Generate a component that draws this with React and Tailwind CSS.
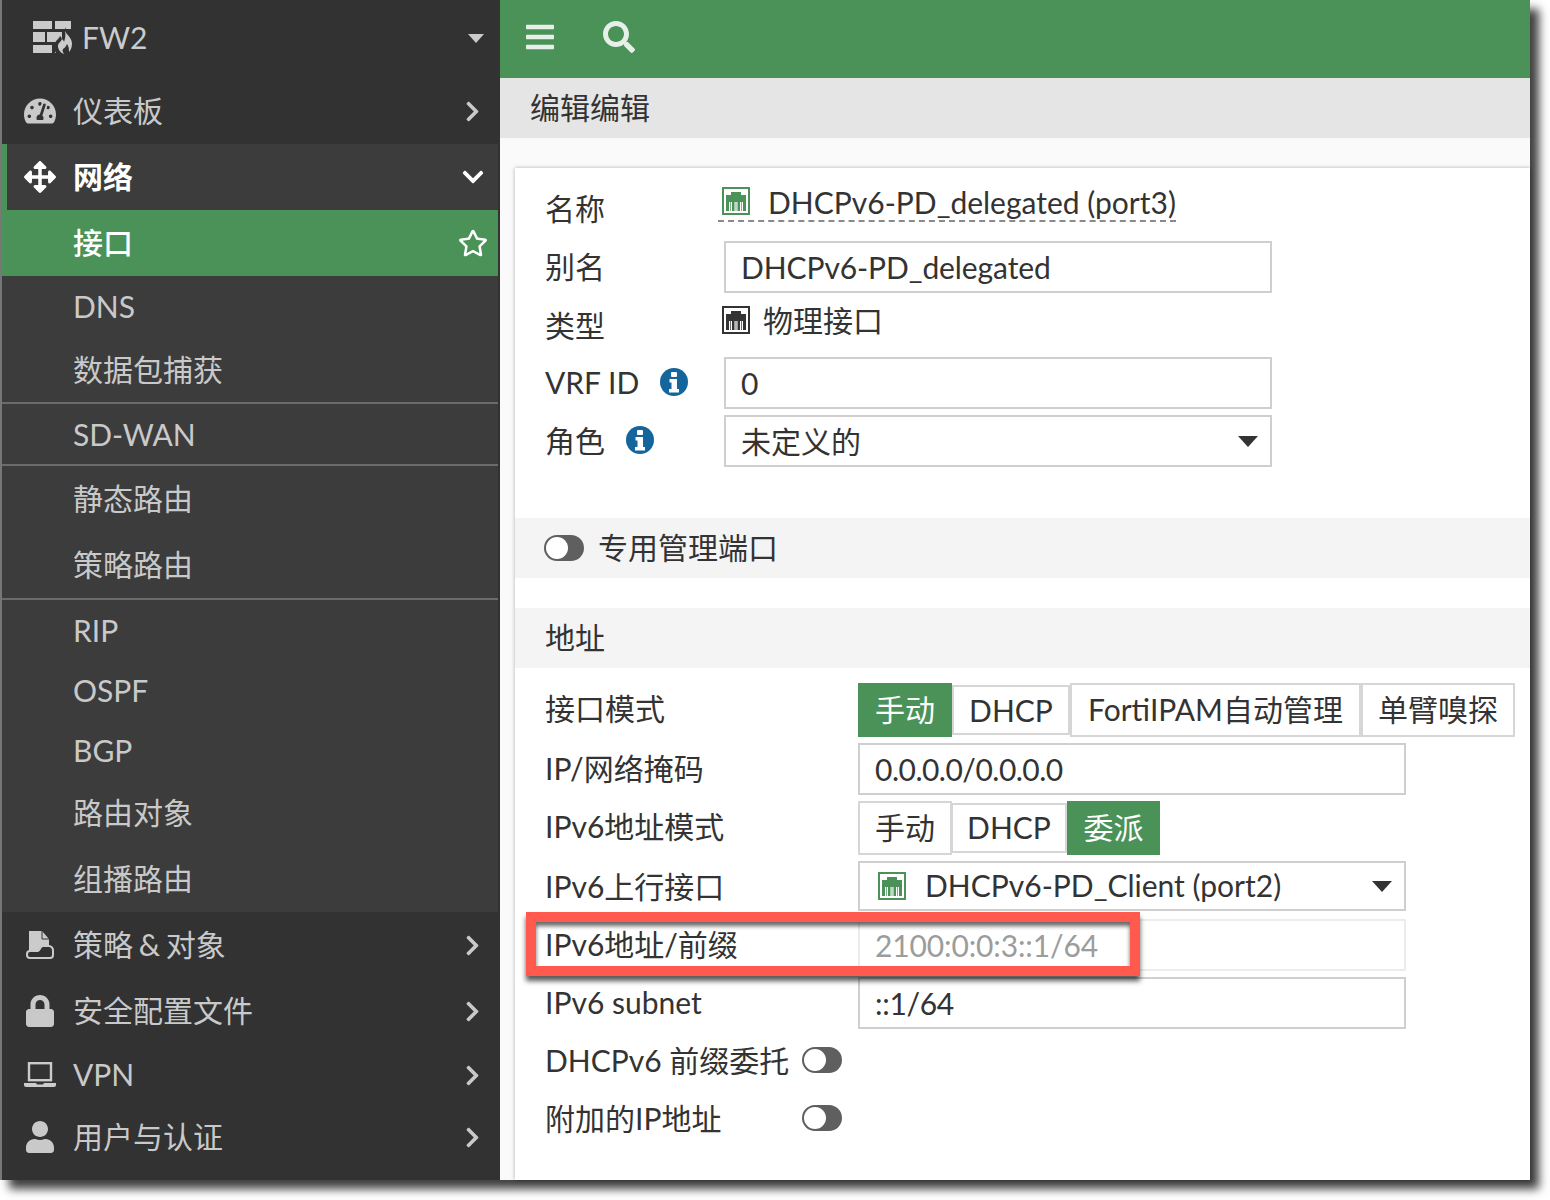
import React from "react";
import { FaTachometerAlt, FaArrowsAlt, FaRegStar, FaChevronRight, FaChevronDown, FaBars, FaSearch, FaLock, FaUser } from "react-icons/fa";

const FONT = "[font-family:Lato,'Noto_Sans_CJK_SC',sans-serif]";

function Logo() {
  return (
    <svg width="41" height="33" viewBox="0 0 41 33" className="shrink-0 -mt-[4px]">
      <g fill="#cbcbcb">
        <rect x="0" y="0" width="19" height="8" />
        <rect x="22" y="0" width="16" height="8" />
        <rect x="0" y="11" width="12" height="10" />
        <rect x="14" y="11" width="15" height="10" />
        <rect x="0" y="24" width="19" height="8" />
        <rect x="22" y="24" width="5" height="8" />
      </g>
      <path d="M32 6c2 5 8 8 8 16 0 5-2 8-4 11H24c-3-3-4-7-2-11 1-3 4-4 5-7 1 1 2 2 2 4 2-3 4-8 3-13z" fill="#323232" />
      <path d="M32 10c2 4 7 7 7 13 0 4-2 7-3 8 0-3 0-5-2-8-1 2-2 4-4 5-1 2 0 3 1 5-3-1-6-4-6-8 0-3 3-4 4-7 1 1 2 2 2 3 1-3 2-7 1-11z" fill="#cbcbcb" />
    </svg>
  );
}

function PolicyIcon() {
  return (
    <svg width="28" height="29" viewBox="0 0 28 29" className="shrink-0">
      <path d="M3 0h13l7 8v7h-7c-2 0-3 5-5 5H3z" fill="#cbcbcb" />
      <path d="M16 0v8h7" fill="none" stroke="#323232" strokeWidth="1" />
      <path d="M4 20h8c2 0 2-5 5-5h6c2 0 4 2 4 4v5c0 2-1 3-3 3H4c-2 0-3-1-3-3v-1c0-2 1-3 3-3z" fill="#323232" stroke="#cbcbcb" strokeWidth="2" />
    </svg>
  );
}

function LaptopIcon() {
  return (
    <svg width="32" height="26" viewBox="0 0 32 26" className="shrink-0">
      <rect x="5" y="1.200" width="22" height="17" fill="none" stroke="#cbcbcb" strokeWidth="2.4" />
      <path d="M0 21h12l1 1.500h6l1-1.500h12v2c0 1-1 2-2 2H2c-1 0-2-1-2-2z" fill="#cbcbcb" />
    </svg>
  );
}

function PortIcon({ color, className = "" }) {
  return (
    <svg width="28" height="28" viewBox="0 0 28 28" className={`shrink-0 ${className}`}>
      <rect x="1" y="1" width="26" height="26" fill="#fff" stroke={color} strokeWidth="2" />
      <path d="M4 8h5V5h10v3h5v16h-20z" fill={color} />
      <path d="M7 15h3v9h-3zM12.500 15h3v9h-3zM18 15h3v9h-3z" fill="#fff" />
      <path d="M8.500 15v9M14 15v9M19.500 15v9" stroke={color} strokeWidth="1" opacity="0.7" />
    </svg>
  );
}

function InfoIcon() {
  return (
    <svg width="28" height="28" viewBox="0 0 28 28" className="shrink-0">
      <circle cx="14" cy="14" r="14" fill="#14659c" />
      <rect x="11" y="4" width="6" height="5" rx="1" fill="#fff" />
      <path d="M9.500 11h7.500v10h2v3.500h-10V21h2.500v-6.500h-2z" fill="#fff" />
    </svg>
  );
}

function Caret({ className = "" }) {
  return <span className={`w-0 h-0 border-l-[10px] border-r-[10px] border-t-[11px] border-l-transparent border-r-transparent border-t-[#333] ${className}`} />;
}

function Toggle() {
  return (
    <span className="relative block w-10 h-[26px] rounded-full bg-[#5f5f5f] shrink-0">
      <span className="absolute left-[2px] top-[2px] w-[22px] h-[22px] rounded-full bg-white" />
    </span>
  );
}

function NavTop({ icon, label, h = "h-[66px]" }) {
  return (
    <div className={`${h} flex items-center text-[#c9c9c9] w-[498px]`}>
      <span className="w-[76px] flex justify-center shrink-0">{icon}</span>
      <span className="flex-1 -ml-[5px] -mt-[2px] [word-spacing:-2px]">{label}</span>
      <FaChevronRight size={23} className="mr-[16px] text-[#c9c9c9]" />
    </div>
  );
}

function Sub({ label, h = "h-[66px]", last, up }) {
  return (
    <div className={`${h} flex items-center pl-[71px] text-[#c9c9c9] ${last ? "border-b-2 border-[#6b6b6b]" : ""}`}>
      <span className={up ? "-mt-[2px]" : ""}>{label}</span>
    </div>
  );
}

function Field({ children, className = "", disabled }) {
  return <div className={`h-[52px] border-2 ${disabled ? "border-[#ececec] text-[#9c9c9c]" : "border-[#cfcfcf]"} flex items-center px-[15px] bg-white ${className}`}>{children}</div>;
}

function Seg({ on, children, className = "", up }) {
  return (
    <div className={`h-[54px] flex items-center justify-center border-2 ${on ? "bg-[#4a9258] border-[#4a9258] text-white" : "border-[#d6d6d6] text-[#333]"} ${className}`}>
      <span className={up ? "-mt-[2px]" : ""}>{children}</span>
    </div>
  );
}

function Row({ label, labelW = "w-[179px]", children, h, mt, up }) {
  return (
    <div className={`flex items-center ${h} ${mt}`}>
      <div className={`${labelW} shrink-0 flex items-center gap-[21px] ${up ? "-mt-[2px]" : ""}`}>{label}</div>
      {children}
    </div>
  );
}

export default function App() {
  return (
    <div className={`w-[1550px] h-[1200px] bg-white text-[30px] leading-none text-[#333] ${FONT}`}>
      <div className="w-[1530px] h-[1180px] flex shadow-[9px_9px_9px_rgba(0,0,0,0.75)]">
        <aside className="w-[500px] h-full bg-[#323232] shrink-0 border-l-2 border-[#777]">
          <div className="h-[78px] flex items-center pl-[31px] w-[498px] text-[#cbcbcb]">
            <Logo />
            <span className="ml-[8px] flex-1 -mt-[4px]">FW2</span>
            <Caret className="mr-[16px] -mt-[2px] !border-l-[8px] !border-r-[8px] !border-t-[9px] !border-t-[#cbcbcb]" />
          </div>
          <NavTop icon={<FaTachometerAlt size={32} />} label="仪表板" />
          <div className="w-[496px] h-[66px] bg-[#3c3c3c] flex items-center text-white font-bold border-l-[5px] border-[#4a9258]">
            <span className="w-[66px] pl-[17px] shrink-0"><FaArrowsAlt size={32} /></span>
            <span className="flex-1 -mt-[2px]">网络</span>
            <FaChevronDown size={24} className="mr-[13px]" />
          </div>
          <div className="w-[496px] h-[66px] bg-[#4a9258] flex items-center pl-[71px] text-white font-medium">
            <span className="flex-1 -mt-[2px]">接口</span>
            <FaRegStar size={30} className="mr-[10px]" />
          </div>
          <div className="w-[496px] bg-[#3c3c3c]">
            <Sub label="DNS" h="h-[62px]" up />
            <Sub label="数据包捕获" h="h-[66px]" last up />
            <Sub label="SD-WAN" h="h-[62px]" last />
            <Sub label="静态路由" up />
            <Sub label="策略路由" h="h-[68px]" last up />
            <Sub label="RIP" h="h-[60px]" />
            <Sub label="OSPF" h="h-[60px]" />
            <Sub label="BGP" h="h-[60px]" />
            <Sub label="路由对象" up />
            <Sub label="组播路由" up />
          </div>
          <NavTop icon={<PolicyIcon />} label="策略 & 对象" />
          <NavTop icon={<FaLock size={32} />} label="安全配置文件" />
          <NavTop icon={<LaptopIcon />} label="VPN" h="h-[62px]" />
          <NavTop icon={<FaUser size={32} />} label="用户与认证" h="h-[62px]" />
        </aside>

        <main className="flex-1 flex flex-col relative bg-[#fafafa] min-w-0">
          <div className="h-[78px] bg-[#4a9258] flex items-center text-[#e6f0e8] shrink-0">
            <FaBars size={32} className="ml-[24px] -mt-[4px]" />
            <FaSearch size={32} className="ml-[47px] -mt-[4px]" />
          </div>
          <div className="h-[60px] bg-[#e5e5e5] flex items-center pl-[30px] shrink-0"><span className="-mt-[2px]">编辑编辑</span></div>
          <div className="mt-[30px] ml-[15px] flex-1 bg-white shadow-[0_0_4px_rgba(0,0,0,0.3)] flex flex-col">
            <div className="pl-[30px] pt-[12px]">
              <Row label="名称" h="h-[58px]" up>
                <div className="flex items-center gap-[18px] h-[36px] -ml-[6px] -mt-[10px] pl-[4px] border-b-2 border-dashed border-[#8a8a8a]">
                  <PortIcon color="#4a9258" className="-mt-[4px]" />
                  <span className="-mt-[2px]">DHCPv6-PD_delegated (port3)</span>
                </div>
              </Row>
              <Row label="别名" h="h-[58px]" up><Field className="w-[548px]"><span className="tracking-[-0.1px]">DHCPv6-PD_delegated</span></Field></Row>
              <Row label="类型" h="h-[58px]">
                <div className="flex items-center gap-[13px] -mt-[10px] -ml-[2px]">
                  <PortIcon color="#333" />
                  <span>物理接口</span>
                </div>
              </Row>
              <Row label={<><span>VRF ID</span><InfoIcon /></>} h="h-[58px]" up><Field className="w-[548px]">0</Field></Row>
              <Row label={<><span>角色</span><InfoIcon /></>} h="h-[58px]" up>
                <Field className="w-[548px] justify-between"><span>未定义的</span><Caret className="mr-[-3px]" /></Field>
              </Row>
            </div>
            <div className="mt-[48px] h-[60px] bg-[#f4f4f4] flex items-center pl-[29px] gap-[14px]"><Toggle /><span className="-mt-[2px]">专用管理端口</span></div>
            <div className="mt-[30px] h-[60px] bg-[#f4f4f4] flex items-center pl-[30px]"><span className="-mt-[2px]">地址</span></div>
            <div className="pl-[30px] pt-[15px]">
              <Row label={<span className="-mt-[4px]">接口模式</span>} labelW="w-[313px]" h="h-[54px]">
                <div className="flex items-center">
                  <Seg on up className="w-[94px]">手动</Seg>
                  <Seg className="w-[118px] !h-[50px]">DHCP</Seg>
                  <Seg up className="w-[291px]">FortiIPAM自动管理</Seg>
                  <Seg up className="w-[154px]">单臂嗅探</Seg>
                </div>
              </Row>
              <Row label={<span className="-mt-[2px]">IP/网络掩码</span>} labelW="w-[313px]" h="h-[52px]" mt="mt-[6px]"><Field className="w-[548px]"><span className="tracking-[-0.5px]">0.0.0.0/0.0.0.0</span></Field></Row>
              <Row label={<span className="-mt-[4px]">IPv6地址模式</span>} labelW="w-[313px]" h="h-[54px]" mt="mt-[6px]">
                <div className="flex items-center">
                  <Seg up className="w-[94px]">手动</Seg>
                  <Seg up className="w-[116px] !h-[50px] -ml-px">DHCP</Seg>
                  <Seg on up className="w-[93px]">委派</Seg>
                </div>
              </Row>
              <Row label="IPv6上行接口" labelW="w-[313px]" h="h-[50px]" mt="mt-[6px]">
                <Field className="w-[548px] !h-[50px] justify-between">
                  <span className="flex items-center gap-[19px] pl-[3px]"><PortIcon color="#4a9258" /><span className="-mt-[2px]">DHCPv6-PD_Client (port2)</span></span>
                  <Caret className="mr-[-3px]" />
                </Field>
              </Row>
              <Row label="IPv6地址/前缀" labelW="w-[313px]" h="h-[52px]" mt="mt-[8px]" up><Field disabled className="w-[548px]"><span className="tracking-[-0.13px]">2100:0:0:3::1/64</span></Field></Row>
              <Row label="IPv6 subnet" labelW="w-[313px]" h="h-[52px]" mt="mt-[6px]" up><Field className="w-[548px]"><span className="tracking-[-0.3px]">::1/64</span></Field></Row>
              <Row label="DHCPv6 前缀委托" labelW="w-[257px]" h="h-[58px]" mt="mt-[2px]"><Toggle /></Row>
              <Row label="附加的IP地址" labelW="w-[257px]" h="h-[58px]"><Toggle /></Row>
            </div>
          </div>
          <div className="absolute left-[26px] top-[912px] w-[614px] h-[64px] border-10 border-[#ff5a4d] shadow-[0_5px_5px_rgba(0,0,0,0.65),inset_0_4px_4px_rgba(0,0,0,0.6)]" />
        </main>
      </div>
    </div>
  );
}
